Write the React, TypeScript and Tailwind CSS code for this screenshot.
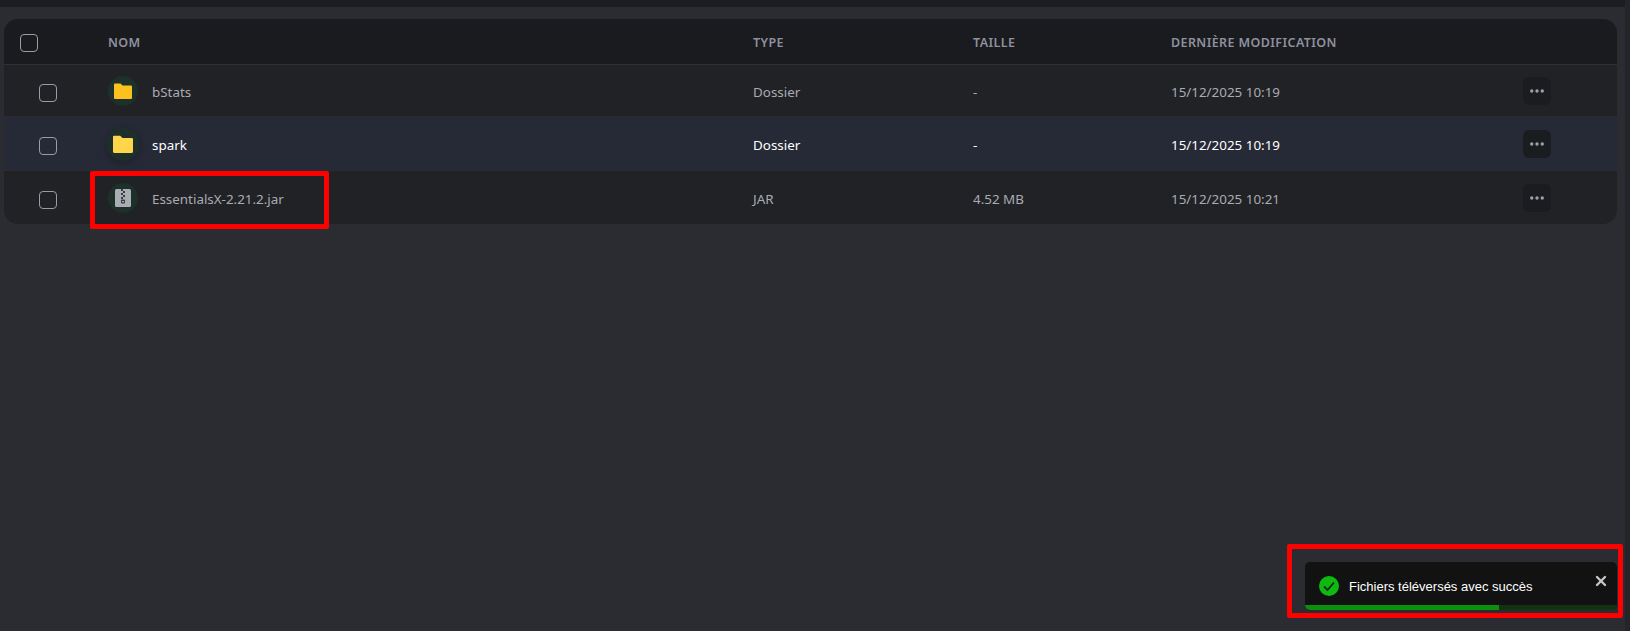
import { MoreHorizontal, X } from "lucide-react";

const files = [
  { name: "bStats", type: "Dossier", size: "-", date: "15/12/2025 10:19", kind: "folder" },
  { name: "spark", type: "Dossier", size: "-", date: "15/12/2025 10:19", kind: "folder", hover: true },
  { name: "EssentialsX-2.21.2.jar", type: "JAR", size: "4.52 MB", date: "15/12/2025 10:21", kind: "zip" },
];

const cols = "grid grid-cols-[104px_645px_220px_198px_352px_1fr] items-center";

function Checkbox() {
  return <div className="h-[18px] w-[18px] rounded-[4px] border border-[#9a9ca6]" />;
}

function FolderIcon({ hover }: { hover?: boolean }) {
  return (
    <svg viewBox="0 0 18 16" className={hover ? "h-[20px] w-[20px]" : "h-[18px] w-[18px]"}>
      <path
        d="M1 0.5h5.5l2 2H17a1 1 0 0 1 1 1V15a1 1 0 0 1-1 1H1a1 1 0 0 1-1-1V1.5a1 1 0 0 1 1-1z"
        fill={hover ? "#ffd54a" : "#fcc11f"}
      />
    </svg>
  );
}

function ZipIcon() {
  return (
    <svg viewBox="0 0 16 18" className="h-[18px] w-[16px]">
      <rect width="16" height="18" rx="1.5" fill="#a9aeb4" />
      <path d="M6 0h2v2H6zM8 2h2v2H8zM6 4h2v2H6zM8 6h2v2H8zM6 8h2v2H6z" fill="#3a3d42" />
      <rect x="6" y="10.5" width="4" height="4" rx="1" fill="#3a3d42" />
      <rect x="7" y="12" width="2" height="1.2" fill="#a9aeb4" />
    </svg>
  );
}

function Row({ file, last }: { file: (typeof files)[number]; last: boolean }) {
  const text = file.hover ? "text-white" : "text-[#a9abb3]";
  const height = file.hover ? "h-[54px] bg-[#262936]" : last ? "h-[53px] bg-[#212226]" : "h-[52px] bg-[#212226]";
  return (
    <div className={`${cols} ${text} ${height} ${last ? "" : "border-b border-[#2b2c32]"}`}>
      <div className="pl-[35px] pt-[4px]">
        <Checkbox />
      </div>
      <div className="flex items-center">
        <div className="flex w-[44px] shrink-0">
          <div
            className={`flex items-center justify-center rounded-full ${
              file.hover
                ? "-ml-[2px] h-[34px] w-[34px] bg-[#1d2e2b] shadow-[0_2px_6px_rgba(0,0,0,0.2)]"
                : "h-[30px] w-[30px] bg-[#1d3029]"
            }`}
          >
            {file.kind === "folder" ? <FolderIcon hover={file.hover} /> : <ZipIcon />}
          </div>
        </div>
        <span className="pt-[4px]">{file.name}</span>
      </div>
      <div className="pt-[4px]">{file.type}</div>
      <div className="pt-[4px]">{file.size}</div>
      <div className="pt-[4px]">{file.date}</div>
      <div>
        <button className="flex h-[28px] w-[28px] items-center justify-center rounded-[6px] bg-[#1b1c20] text-[#a0a2ae]">
          <MoreHorizontal size={18} strokeWidth={2.5} />
        </button>
      </div>
    </div>
  );
}

export default function App() {
  return (
    <div className="relative h-[631px] w-full overflow-hidden bg-[#2b2c32] font-['Noto_Sans',sans-serif] text-[13.4px]">
      <div className="h-[7px] bg-[#1c1d21]" />
      <div className="pl-[4px] pr-[13px] pt-[12px]">
        <div className="overflow-hidden rounded-[14px]">
          <div className={`${cols} h-[46px] border-b border-[#2f3035] bg-[#1a1b1f] text-[12.5px] font-semibold tracking-[0.4px] text-[#8f919d]`}>
            <div className="pl-[16px] pt-[3px]">
              <Checkbox />
            </div>
            <div className="pt-[4px]">NOM</div>
            <div className="pt-[4px]">TYPE</div>
            <div className="pt-[4px]">TAILLE</div>
            <div className="pt-[4px]">DERNIÈRE MODIFICATION</div>
            <div />
          </div>
          {files.map((file, i) => (
            <Row key={file.name} file={file} last={i === files.length - 1} />
          ))}
        </div>
      </div>

      {/* scrollbar strip */}
      <div className="absolute right-0 top-0 h-full w-[5px] bg-[#24252a]" />

      {/* toast */}
      <div className="absolute left-[1305px] top-[562px] h-[48px] w-[312px] overflow-hidden rounded-[5px] bg-[#121212] font-['Liberation_Sans',sans-serif] text-[13px] text-white">
        <div className="flex h-[48px] items-center pl-[14px]">
          <svg viewBox="0 0 20 20" className="h-[20px] w-[20px]">
            <circle cx="10" cy="10" r="10" fill="#10b812" />
            <path d="M5 10.5l3.5 3.5 6.5-7.5" fill="none" stroke="#12281a" strokeWidth="1.8" />
          </svg>
          <span className="ml-[10px] pt-[1px]">Fichiers téléversés avec succès</span>
        </div>
        <button className="absolute right-[8px] top-[11px] text-[#c8c8c8]">
          <X size={16} strokeWidth={3.5} />
        </button>
        <div className="absolute bottom-0 left-0 h-[5px] w-full bg-[#123212]">
          <div className="h-full w-[194px] bg-[#0b8f0d]" />
        </div>
      </div>

      {/* red annotation boxes */}
      <div className="absolute left-[90px] top-[171px] h-[58px] w-[239px] rounded-[2px] border-[5px] border-[#ff0000]" />
      <div className="absolute left-[1287px] top-[544px] h-[74px] w-[336px] rounded-[2px] border-[5px] border-[#ff0000]" />
    </div>
  );
}
